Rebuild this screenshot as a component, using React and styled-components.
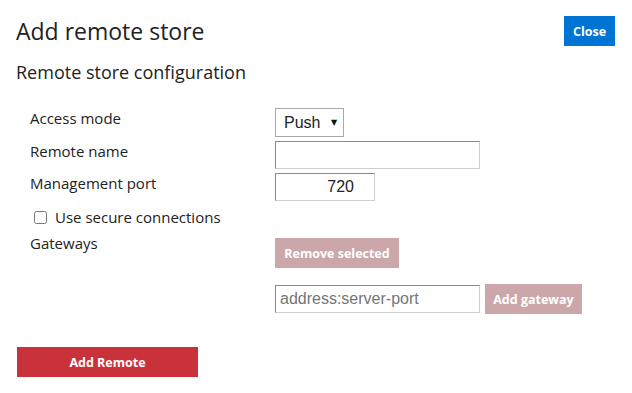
import React from 'react'
import styled, { createGlobalStyle } from 'styled-components'

const GlobalStyle = createGlobalStyle`
    body{
        margin: 0;
        background: #fff;
        font-family: "Open Sans", "Noto Sans", sans-serif;
        color: #222;
    }
`

export default function App() {
    return (
        <Page>
            <GlobalStyle />
            <Header>
                <Title>Add remote store</Title>
                <Button tone="blue" w={51}>Close</Button>
            </Header>
            <SubTitle>Remote store configuration</SubTitle>

            <Form>
                <Row top={24}>
                    <Label>Access mode</Label>
                    <SelectBox>
                        <Select defaultValue="Push">
                            <option>Push</option>
                            <option>Pull</option>
                        </Select>
                        <Arrow>▼</Arrow>
                    </SelectBox>
                </Row>
                <Row top={4}>
                    <Label>Remote name</Label>
                    <Input w={205} />
                </Row>
                <Row top={4}>
                    <Label>Management port</Label>
                    <Input w={100} right defaultValue="720" />
                </Row>
                <Row top={4}>
                    <CheckLabel>
                        <input type="checkbox" />
                        Use secure connections
                    </CheckLabel>
                </Row>
                <Row top={4}>
                    <Label>Gateways</Label>
                    <Cell pad={5}>
                        <Button tone="muted" w={124}>Remove selected</Button>
                    </Cell>
                </Row>
                <Row top={16} center>
                    <Label />
                    <Inline>
                        <Input w={205} h={28} placeholder="address:server-port" />
                        <Button tone="muted" w={97}>Add gateway</Button>
                    </Inline>
                </Row>
            </Form>

            <Footer>
                <Button tone="red" w={181}>Add Remote</Button>
            </Footer>
        </Page>
    )
}

const Page = styled.div`
    width: 632px;
    height: 393px;
    box-sizing: border-box;
    padding: 16px 17px 0 16px;
`
const Header = styled.div`
    display: flex;
    justify-content: space-between;
    align-items: flex-start;
`
const Title = styled.h2`
    margin: 0;
    font-size: 23px;
    font-weight: 400;
    line-height: 30px;
    color: #222;
`
const SubTitle = styled.h3`
    margin: 14px 0 0 0;
    font-size: 18px;
    font-weight: 400;
    line-height: 24px;
    color: #222;
`
const Form = styled.div`
    padding-left: 14px;
`
const Row = styled.div`
    display: grid;
    grid-template-columns: 245px 1fr;
    align-items: ${p => p.center ? 'center' : 'start'};
    margin-top: ${p => p.top}px;
`
const Label = styled.div`
    font-size: 15px;
    line-height: 20px;
    color: #222;
`
const Cell = styled.div`
    padding-top: ${p => p.pad || 0}px;
`
const Inline = styled.div`
    display: flex;
    align-items: center;
    gap: 5px;
`
const CheckLabel = styled.label`
    grid-column: 1 / 3;
    display: flex;
    align-items: center;
    font-size: 15px;
    line-height: 24px;
    color: #222;
    input{
        width: 13px;
        height: 13px;
        margin: 0 8px 0 4px;
    }
`
const SelectBox = styled.div`
    width: 69px;
    height: 29px;
    box-sizing: border-box;
    border: 1px solid #a9a9a9;
    display: flex;
    align-items: center;
    background: #fff;
`
const Select = styled.select`
    appearance: none;
    border: none;
    background: transparent;
    font-family: "Liberation Sans", Arial, sans-serif;
    font-size: 16px;
    color: #222;
    padding: 0 0 0 8px;
    width: 48px;
    outline: none;
`
const Arrow = styled.span`
    font-family: "DejaVu Sans", sans-serif;
    font-size: 8px;
    color: #111;
    margin-left: 7px;
`
const Input = styled.input`
    width: ${p => p.w}px;
    height: ${p => p.h || 28}px;
    box-sizing: border-box;
    border: 1px solid;
    border-color: #8a8a8a #cfcfcf #cfcfcf #8a8a8a;
    font-family: "Liberation Sans", Arial, sans-serif;
    font-size: 16px;
    color: #222;
    padding: 0 ${p => p.right ? 20 : 4}px 0 4px;
    text-align: ${p => p.right ? 'right' : 'left'};
    margin: 0;
    outline: none;
    &::placeholder{
        color: #757575;
    }
`
const tones = {
    blue: '#0074d4',
    muted: '#cca7a9',
    red: '#c9323b',
}
const Button = styled.button`
    width: ${p => p.w}px;
    height: 30px;
    border: none;
    border-radius: 0;
    padding: 0;
    background: ${p => tones[p.tone]};
    color: #fff;
    font-family: "Open Sans", "Noto Sans", sans-serif;
    font-weight: 700;
    font-size: 12.5px;
    cursor: pointer;
    flex-shrink: 0;
`
const Footer = styled.div`
    margin-top: 33px;
    padding-left: 1px;
`
